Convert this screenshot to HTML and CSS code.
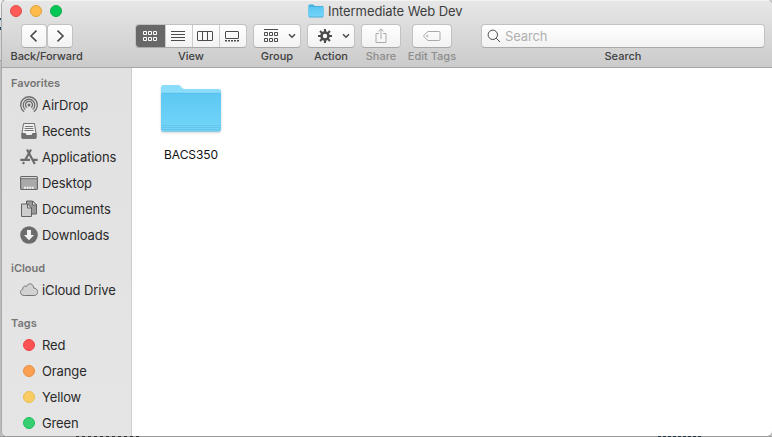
FILE: index.html
```html
<!DOCTYPE html>
<html lang="en">
<head>
<meta charset="utf-8">
<title>Intermediate Web Dev</title>
<link rel="stylesheet" href="styles.css">
</head>
<body>
<svg width="0" height="0" class="defs" aria-hidden="true">
  <defs>
    <linearGradient id="folder" x1="0" y1="0" x2="0" y2="1"><stop offset="0" stop-color="#5cc8f3"/><stop offset="1" stop-color="#74d5f9"/></linearGradient>
  </defs>
</svg>
<div class="backdrop" aria-hidden="true"></div>
<div class="window">
  <header class="toolbar">
    <div class="titlebar">
      <div class="lights"><i class="close"></i><i class="minimize"></i><i class="zoom"></i></div>
      <div class="title">
        <svg width="16" height="14" viewBox="0 0 16 14"><path d="M.5 12.3V1.500Q.5.6 1.400.6h4l1.500 1.300h7.700q.9 0 .9.900v9.500z" fill="#45b1df"/><path d="M.5 3h15v9.300q0 .9-.9.900H1.400q-.9 0-.9-.9z" fill="url(#folder)"/><path d="M.7 13h14.600" stroke="#4ba6ca" stroke-width=".8"/></svg>
        <h1>Intermediate Web Dev</h1>
      </div>
    </div>
    <div class="tools">
      <div class="tool nav">
        <div class="pair">
          <button class="btn"><svg width="24" height="22" viewBox="0 0 24 22"><path d="M14.500 5.700 9 11l5.500 5.300" class="chev"/></svg></button>
          <button class="btn"><svg width="24" height="22" viewBox="0 0 24 22"><path d="m9.500 5.700 5.500 5.300-5.500 5.300" class="chev"/></svg></button>
        </div>
        <span class="label">Back/Forward</span>
      </div>
      <div class="tool view">
        <div class="btn segments">
          <span class="seg on"><svg width="16" height="12" viewBox="0 0 16 12"><path d="M1.500 1.500h3v3h-3zM6.500 1.500h3v3h-3zM11.500 1.500h3v3h-3zM1.500 7.500h3v3h-3zM6.500 7.500h3v3h-3zM11.500 7.500h3v3h-3z"/></svg></span>
          <span class="seg"><svg width="16" height="12" viewBox="0 0 16 12"><path d="M1 1.500h14M1 4.500h14M1 7.500h14M1 10.500h14"/></svg></span>
          <span class="seg"><svg width="16" height="12" viewBox="0 0 16 12"><path d="M1 1.500h14q.5 0 .5.500v8q0 .5-.5.500H1q-.5 0-.5-.5V2q0-.5.500-.5zM5.500 1.500v9M10.500 1.500v9"/></svg></span>
          <span class="seg"><svg width="16" height="12" viewBox="0 0 16 12"><path d="M2 1.500h12q.5 0 .5.500v6q0 .5-.5.500H2q-.5 0-.5-.5V2q0-.5.500-.5z"/><path d="M1 10.800h14" stroke-width="1.600" stroke-dasharray="2 1"/></svg></span>
        </div>
        <span class="label">View</span>
      </div>
      <div class="tool group">
        <button class="btn menu"><svg width="16" height="14" viewBox="0 0 16 14"><path d="M1 .5h14M1.500 3.500h3v3h-3zM6.500 3.500h3v3h-3zM11.500 3.500h3v3h-3zM1.500 9.500h3v3h-3zM6.500 9.500h3v3h-3zM11.500 9.500h3v3h-3z"/></svg><svg width="8" height="6" viewBox="0 0 8 6"><path d="m1 1.300 3 3 3-3" class="arrow"/></svg></button>
        <span class="label">Group</span>
      </div>
      <div class="tool action">
        <button class="btn menu"><svg width="16" height="14" viewBox="0 0 16 14"><g class="gear"><circle cx="8" cy="7" r="3.500"/><path d="M8 0v3M8 11v3M1 7h3M12 7h3M3.050 2.050l2.200 2.200M10.750 9.750l2.200 2.200M3.050 11.950l2.200-2.200M10.750 4.250l2.200-2.200"/></g></svg><svg width="8" height="6" viewBox="0 0 8 6"><path d="m1 1.300 3 3 3-3" class="arrow"/></svg></button>
        <span class="label">Action</span>
      </div>
      <div class="tool share off">
        <button class="btn"><svg width="14" height="16" viewBox="0 0 14 16"><path d="M5 5.500H2v9h10v-9H9M7 11V1M4.300 3.500 7 .8l2.700 2.700"/></svg></button>
        <span class="label">Share</span>
      </div>
      <div class="tool tags off">
        <button class="btn"><svg width="18" height="12" viewBox="0 0 18 12"><path d="M5 1.500h11q1 0 1 1v7q0 1-1 1H5L1.300 7.300Q.1 6 1.300 4.700z"/><circle cx="4.300" cy="6" r=".7"/></svg></button>
        <span class="label">Edit Tags</span>
      </div>
      <div class="tool search">
        <div class="btn field"><svg width="14" height="14" viewBox="0 0 14 14"><circle cx="5.800" cy="5.800" r="4.700"/><path d="m9.200 9.200 3.800 3.800"/></svg><span>Search</span></div>
        <span class="label">Search</span>
      </div>
    </div>
  </header>
  <div class="body">
    <nav class="sidebar">
      <h2>Favorites</h2>
      <ul>
        <li><svg width="18" height="18" viewBox="0 0 18 18"><g fill="none" stroke="#6d6d6d" stroke-width="1.300"><path d="M4.200 15.800a8.300 8.300 0 1 1 9.600 0"/><path d="M5.400 13.600a5.800 5.800 0 1 1 7.200 0"/><path d="M6.900 11.600a3.500 3.500 0 1 1 4.200 0"/></g><circle cx="9" cy="9" r="1.500" fill="#6d6d6d"/></svg><span>AirDrop</span></li>
        <li><svg width="18" height="18" viewBox="0 0 18 18"><path d="M3.500 1.500h11l1.500 10v4q0 .8-.8.8H2.800q-.8 0-.8-.8v-4z" fill="#f0f0f0" stroke="#707070"/><path d="M5 4.500h8M4.600 6.500h8.800M4.300 8.500h9.400" stroke="#777"/><path d="M1.500 11h4l1 2h5l1-2h4v5q0 .8-.8.8H2.300q-.8 0-.8-.8z" fill="#707070"/></svg><span>Recents</span></li>
        <li><svg width="18" height="18" viewBox="0 0 18 18"><g fill="none" stroke="#6b6b6b" stroke-width="2.200"><path d="M7 1.500 14.800 16M11 1.500 5.200 12M4 14l-1 1.900"/><path d="M.3 11.800h9.700M12.500 11.800h5.200"/></g></svg><span>Applications</span></li>
        <li><svg width="18" height="18" viewBox="0 0 18 18"><rect x=".6" y="2.500" width="16.800" height="13" rx="1" fill="#aaa" stroke="#656565" stroke-width="1.100"/><path d="M1 4.700h16" stroke="#707070"/><path d="M1.200 3.600h15.600" stroke="#ddd" stroke-width="1"/><path d="M4 13.800h10" stroke="#f2f2f2" stroke-width="2" stroke-dasharray="1.900 .7"/></svg><span>Desktop</span></li>
        <li><svg width="18" height="18" viewBox="0 0 18 18"><g stroke="#626262" stroke-linejoin="round"><path d="M6.500 1h6l4 4v9h-10z" fill="#999"/><path d="M12.500 1v4h4z" fill="#eee"/><path d="M1.500 4h6l4 4v8.500h-10z" fill="#ccc"/><path d="M7.500 4v4h4z" fill="#eee"/></g></svg><span>Documents</span></li>
        <li><svg width="18" height="18" viewBox="0 0 18 18"><circle cx="9" cy="9" r="8.800" fill="#6c6c6c"/><path d="M7 4h4v5h3l-5 5.200L4 9h3z" fill="#f3f3f3"/></svg><span>Downloads</span></li>
      </ul>
      <h2>iCloud</h2>
      <ul>
        <li><svg width="18" height="18" viewBox="0 0 18 18"><path d="M4.300 14.500C-.3 14.500-.6 9.200 2.800 8.300 2.500 5.600 5 4.400 6.500 5.500c1.500-4 7-3.300 7.300 1.600 5.200.3 4.800 7.400.5 7.400z" fill="#d2d2d2" stroke="#737373"/></svg><span>iCloud Drive</span></li>
      </ul>
      <h2>Tags</h2>
      <ul>
        <li><i class="dot red"></i><span>Red</span></li>
        <li><i class="dot orange"></i><span>Orange</span></li>
        <li><i class="dot yellow"></i><span>Yellow</span></li>
        <li><i class="dot green"></i><span>Green</span></li>
      </ul>
    </nav>
    <main class="content">
      <figure class="item">
        <svg width="64" height="52" viewBox="0 0 64 52"><path d="M2 47V6.500Q2 4 4.500 4h15c2 0 3 4 6 4h34Q62 8 62 10.500V47z" fill="#8bdefb"/><path d="M2 13.500Q2 12 3.500 12h57q1.500 0 1.500 1.500v34.700q0 2.300-2.300 2.300H4.300Q2 50.500 2 48.200z" fill="url(#folder)"/><path d="M2.500 12.200h59" stroke="#58b9dd" stroke-width=".6"/><path d="M2 44.500h60M2 46.500h60M2 48.500h60M3 50.200h58" stroke="#5bb9dd" stroke-width=".5"/></svg>
        <figcaption>BACS350</figcaption>
      </figure>
    </main>
  </div>
</div>
<div class="behind" aria-hidden="true"></div>
</body>
</html>
```
FILE: styles.css
```css
* { box-sizing: border-box; }
html, body { margin: 0; height: 100%; overflow: hidden; }
body { background: #dedede; font-family: Inter, "Liberation Sans", sans-serif; color: #2a2a2a; padding-left: 2px; }
.defs { position: absolute; }
svg { display: block; flex: none; }
.backdrop { position: absolute; left: 0; top: 0; width: 2px; height: 437px; background: linear-gradient(#eee 0 18px, #1d4b6c 18px 20px, #d8d8d8 20px 27px, #1d4b6c 27px 30px, #d5d5d5 30px 60px, #999 60px 61px, #bcbcbc 61px); }
.behind { position: absolute; left: 0; top: 436px; width: 772px; height: 1px; background: repeating-linear-gradient(90deg, #333 0 3px, #999 3px 6px) 76px 0 / 66px 1px no-repeat, repeating-linear-gradient(90deg, #234 0 3px, #999 3px 5px) 658px 0 / 44px 1px no-repeat, #999; }
.window { position: relative; width: 770px; height: 436px; border-radius: 5px; overflow: hidden; background: #fff; box-shadow: 0 0 0 1px #aaa; display: flex; flex-direction: column; }
.toolbar { height: 68px; flex: none; background: linear-gradient(#e7e7e7, #cbcbcb); border-bottom: 1px solid #a5a5a5; box-shadow: inset 0 1px #f3f3f3; }
.titlebar { height: 24px; display: flex; align-items: flex-start; }
.lights { display: flex; gap: 8px; padding: 5px 0 0 8px; width: 306px; }
.lights i { width: 12px; height: 12px; border-radius: 50%; border: 1px solid; }
.lights .close { background: #fc5b57; border-color: #e24b46; }
.lights .minimize { background: #fdbc4b; border-color: #dfa13a; }
.lights .zoom { background: #05c756; border-color: #09ae45; }
.title { display: flex; align-items: center; gap: 4px; height: 22px; }
h1 { margin: 0; font-size: 13px; font-weight: 400; color: #3e3e3e; letter-spacing: -.08px; white-space: nowrap; }
.tools { display: flex; }
.tool { display: flex; flex-direction: column; align-items: center; }
.label { font-size: 11px; line-height: 14px; margin-top: 2px; white-space: nowrap; color: #404040; font-weight: 500; }
.nav .label { letter-spacing: -.1px; }
.off .label { color: #8d8d8d; }
.btn { appearance: none; font: inherit; padding: 0; height: 24px; width: 100%; border: 1px solid #c2c2c2; border-bottom-color: #a9a9a9; border-radius: 4px; background: linear-gradient(#fff, #f2f2f2); display: flex; align-items: center; justify-content: center; }
.label { margin-top: 1px; }
.btn svg { fill: none; stroke: #4b4b4b; stroke-width: 1; }
.off .btn svg { stroke: #aaa; }
.chev { stroke-width: 1.6; stroke: #4b4b4b; }
.arrow { stroke-width: 1.5; }
.pair { display: flex; width: 100%; }
.nav { width: 52px; margin-left: 18.6px; }
.view { width: 112px; margin-left: 62.4px; }
.group { width: 48px; margin-left: 6px; }
.action { width: 48px; margin-left: 6px; }
.share { width: 40px; margin-left: 6px; }
.tags { width: 40px; margin-left: 11px; }
.search { width: 284px; margin-left: 29px; }
.segments { overflow: hidden; }
.seg { flex: 1; height: 24px; display: flex; align-items: center; justify-content: center; border-left: 1px solid #ccc; padding-right: 2px; }
.seg.on { flex: 0 0 29px; background: #686868; border: 0; padding: 0; }
.seg.on svg { stroke: #fff; }
.menu { justify-content: flex-start; gap: 9px; padding-left: 9px; }
.gear circle { stroke-width: 2.6; }
.gear path { stroke-width: 2.1; }
.field { justify-content: flex-start; gap: 4px; padding-left: 5px; font-size: 13px; letter-spacing: -.15px; color: #b0b0b0; }
.body { flex: 1; display: flex; min-height: 0; }
.sidebar { width: 130px; flex: none; background: linear-gradient(#e1e1e1, #e5e5e5); border-right: 1px solid #cecece; padding: 8px 0 0 9px; }
h2 { margin: 0; font-size: 11px; line-height: 14px; font-weight: 600; color: #757575; }
ul { margin: 2px 0 13px; padding: 0 0 0 9px; list-style: none; }
li { height: 26px; display: flex; align-items: center; gap: 4px; font-size: 13px; letter-spacing: -.13px; white-space: nowrap; }
.dot { width: 12px; height: 12px; border-radius: 50%; margin: 0 3px; border: 1px solid; }
.red { background: #fc5252; border-color: #ef4045; }
.orange { background: #fb9f53; border-color: #ec8c3f; }
.yellow { background: #facd64; border-color: #eabd4f; }
.green { background: #36cf72; border-color: #20bf5d; }
.content { flex: 1; padding: 13px 0 0 27px; }
.item { margin: 0; width: 64px; display: flex; flex-direction: column; align-items: center; }
.item svg { filter: drop-shadow(0 1px 1px #0003); }
figcaption { font-size: 12px; line-height: 16px; margin-top: 14px; letter-spacing: -.1px; color: #111; }
```
